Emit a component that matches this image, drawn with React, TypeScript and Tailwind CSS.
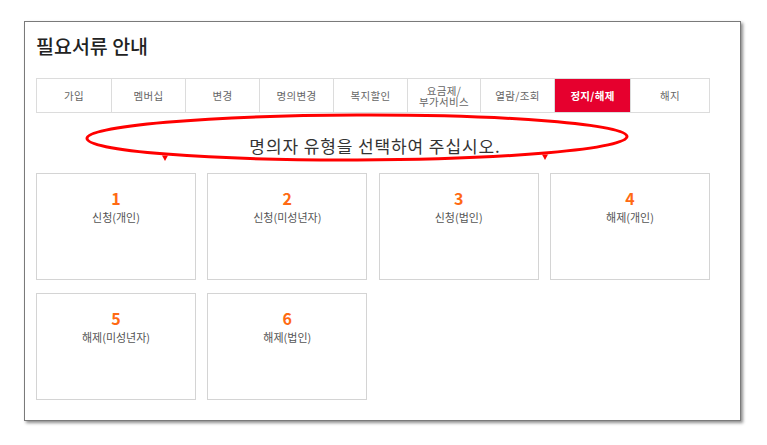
const TABS = [
  { label: '가입', w: 'w-[74px]' },
  { label: '멤버십', w: 'w-[74px]' },
  { label: '변경', w: 'w-[74px]' },
  { label: '명의변경', w: 'w-[74px]' },
  { label: '복지할인', w: 'w-[74px]' },
  { label: '요금제/\n부가서비스', w: 'w-[73px]' },
  { label: '열람/조회', w: 'w-[74px]' },
  { label: '정지/해제', w: 'w-[76px]', active: true },
  { label: '해지', w: 'flex-1' },
];

const TYPES = [
  { no: 1, label: '신청(개인)' },
  { no: 2, label: '신청(미성년자)' },
  { no: 3, label: '신청(법인)' },
  { no: 4, label: '해제(개인)' },
  { no: 5, label: '해제(미성년자)' },
  { no: 6, label: '해제(법인)' },
];

export default function App() {
  return (
    <div
      className="relative w-[767px] h-[445px] bg-white overflow-hidden"
      style={{ fontFamily: '"Noto Sans CJK KR", "Noto Sans", sans-serif' }}
    >
      <div className="ml-[24px] mt-[21px] w-[717px] h-[400px] border border-[#7a7a7a] bg-white shadow-[2px_2px_3px_rgba(0,0,0,0.45)] px-[11px] pt-[12px]">
        {/* Title */}
        <h1 className="text-[19.5px] leading-[24px] font-medium text-[#222]">필요서류 안내</h1>

        {/* Tabs */}
        <div className="mt-[20px] flex h-[35px] w-[674px] border border-[#dcdcdc]">
          {TABS.map((t, i) => (
            <div
              key={t.label}
              className={`${t.w} flex items-center justify-center text-center whitespace-pre-line text-[10.5px] leading-[11px] tracking-[0.3px] ${
                i > 0 ? 'border-l border-[#dcdcdc]' : ''
              } ${t.active ? 'bg-[#e6002e] text-white font-bold' : 'text-[#666]'}`}
            >
              {t.label}
            </div>
          ))}
        </div>

        {/* Prompt */}
        <div className="h-[60px] w-[674px] pt-[21px] pl-[4px] text-center text-[17px] leading-[24px] tracking-[0.9px] text-[#333]">
          명의자 유형을 선택하여 주십시오.
        </div>

        {/* Cards */}
        <div className="grid w-[674px] grid-cols-4 gap-x-[11.3px] gap-y-[13px]">
          {TYPES.map((c) => (
            <div key={c.no} className="h-[107px] border border-[#d4d4d4] bg-white flex flex-col items-center pt-[14px]">
              <div className="text-[16px] leading-[20px] font-bold text-[#ff6a13]">{c.no}</div>
              <div className="mt-[1px] text-[11px] leading-[16px] text-[#555]">{c.label}</div>
            </div>
          ))}
        </div>
      </div>

      {/* Red annotation drawn over the screenshot */}
      <svg className="absolute left-0 top-0 pointer-events-none" width="767" height="445" viewBox="0 0 767 445">
        <ellipse cx="357" cy="137.5" rx="270" ry="22.5" fill="none" stroke="#ff0000" strokeWidth="3" transform="rotate(-0.2 357 137.5)" />
        <polygon points="162,155.5 168,155.5 165,161" fill="#ff0000" />
        <polygon points="542,154.5 548,154.5 545,160" fill="#ff0000" />
      </svg>
    </div>
  );
}
